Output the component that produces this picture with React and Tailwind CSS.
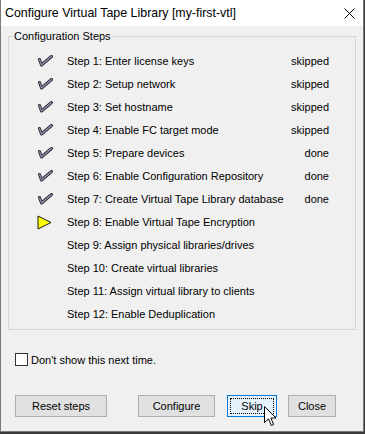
const steps = [
  { label: 'Step 1: Enter license keys', state: 'check', status: 'skipped' },
  { label: 'Step 2: Setup network', state: 'check', status: 'skipped' },
  { label: 'Step 3: Set hostname', state: 'check', status: 'skipped' },
  { label: 'Step 4: Enable FC target mode', state: 'check', status: 'skipped' },
  { label: 'Step 5: Prepare devices', state: 'check', status: 'done' },
  { label: 'Step 6: Enable Configuration Repository', state: 'check', status: 'done' },
  { label: 'Step 7: Create Virtual Tape Library database', state: 'check', status: 'done' },
  { label: 'Step 8: Enable Virtual Tape Encryption', state: 'current', status: '' },
  { label: 'Step 9: Assign physical libraries/drives', state: '', status: '' },
  { label: 'Step 10: Create virtual libraries', state: '', status: '' },
  { label: 'Step 11: Assign virtual library to clients', state: '', status: '' },
  { label: 'Step 12: Enable Deduplication', state: '', status: '' },
];

function CheckIcon() {
  return (
    <svg width="16" height="12" viewBox="0 0 16 12">
      <path d="M2.5 4.5 L4.5 10 L14.5 1.5" fill="none" stroke="#2a2a38" strokeWidth="3" strokeLinejoin="round" strokeLinecap="round" />
      <path d="M2.5 4.5 L4.5 10 L14.5 1.5" fill="none" stroke="#9a9ab4" strokeWidth="1.1" strokeLinejoin="round" strokeLinecap="round" />
    </svg>
  );
}

function ArrowIcon() {
  return (
    <svg width="15" height="15" viewBox="0 0 15 15">
      <polygon points="1,1 14,7.5 1,14" fill="#ffff00" stroke="#1a1a1a" strokeWidth="1" />
    </svg>
  );
}

function Cursor() {
  return (
    <svg width="13" height="21" viewBox="0 0 13 21" className="absolute left-[264px] top-[406px]">
      <path d="M0.5 0.5 L0.5 16.5 L4.5 12.8 L7.3 19.5 L9.6 18.5 L6.9 12 L12 12 Z" fill="#fff" stroke="#000" strokeWidth="1" strokeLinejoin="miter" />
    </svg>
  );
}

function Button({ children, className = '', focused = false }) {
  return (
    <button
      className={
        'h-[22px] border text-[11px] text-black ' +
        (focused ? 'border-[#0078d7] bg-[#e5f1fb] p-[2px] ' : 'border-[#adadad] bg-[#e1e1e1] ') +
        className
      }
    >
      {focused ? (
        <span className="flex h-full w-full items-center justify-center border border-dotted border-black">{children}</span>
      ) : (
        children
      )}
    </button>
  );
}

export default function App() {
  return (
    <div className="relative h-[434px] w-[365px] bg-[#3a3a3a] font-['Liberation_Sans',Arial,sans-serif] text-[11px] text-black">
      <div className="flex h-[432px] w-[364px] flex-col border-x border-b border-[#7a7a7a] bg-[#f0f0f0]">
        <div className="flex h-[26px] items-center justify-between bg-white pl-[4px] pr-[8px]">
          <span className="text-[12.4px]">Configure Virtual Tape Library [my-first-vtl]</span>
          <svg width="11" height="11" viewBox="0 0 11 11">
            <path d="M0.5 0.5 L10.5 10.5 M10.5 0.5 L0.5 10.5" stroke="#000" strokeWidth="1" />
          </svg>
        </div>

        <fieldset className="mx-[7px] mt-[4px] border border-[#d5d5d5] pb-[3px] pt-[6.5px] pr-[26px]">
          <legend className="ml-[4px] px-[1px] leading-[13px]">Configuration Steps</legend>
          {steps.map((s) => (
            <div key={s.label} className="flex h-[23px] items-center">
              <div className="ml-[28px] flex w-[30px] items-center">
                {s.state === 'check' && <CheckIcon />}
                {s.state === 'current' && <ArrowIcon />}
              </div>
              <span className="flex-1">{s.label}</span>
              <span>{s.status}</span>
            </div>
          ))}
        </fieldset>

        <label className="ml-[14px] mt-[22px] flex items-center gap-[3px]">
          <span className="h-[13px] w-[13px] border border-[#333] bg-white" />
          <span>Don't show this next time.</span>
        </label>

        <div className="ml-[14px] mt-[27px] flex">
          <Button className="w-[92px]">Reset steps</Button>
          <Button className="ml-[31px] w-[77px]">Configure</Button>
          <Button focused className="ml-[12px] w-[50px]">Skip</Button>
          <Button className="ml-[11px] w-[48px]">Close</Button>
        </div>
      </div>
      <Cursor />
    </div>
  );
}
